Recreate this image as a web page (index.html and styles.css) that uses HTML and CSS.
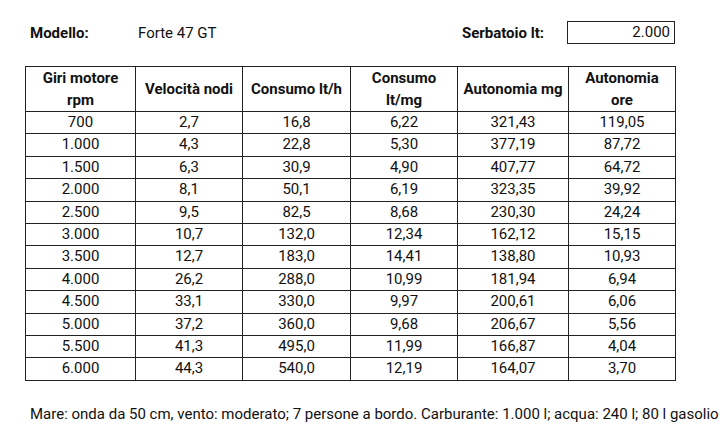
FILE: index.html
```html
<!DOCTYPE html>
<html lang="it">
<head>
<meta charset="utf-8">
<title>Forte 47 GT</title>
<link rel="stylesheet" href="styles.css">
</head>
<body>
<div class="sheet">
  <div class="top">
    <span class="label">Modello:</span>
    <span class="model">Forte 47 GT</span>
    <span class="spacer"></span>
    <span class="label-r">Serbatoio lt:</span>
    <span class="box">2.000</span>
  </div>
  <table class="data">
    <colgroup>
      <col class="c1"><col class="c2"><col class="c3"><col class="c4"><col class="c5"><col class="c6">
    </colgroup>
    <thead>
      <tr><th>Giri motore<br>rpm</th><th>Velocità nodi</th><th>Consumo lt/h</th><th>Consumo<br>lt/mg</th><th>Autonomia mg</th><th>Autonomia<br>ore</th></tr>
    </thead>
    <tbody>
      <tr><td>700</td><td>2,7</td><td>16,8</td><td>6,22</td><td>321,43</td><td>119,05</td></tr>
      <tr><td>1.000</td><td>4,3</td><td>22,8</td><td>5,30</td><td>377,19</td><td>87,72</td></tr>
      <tr><td>1.500</td><td>6,3</td><td>30,9</td><td>4,90</td><td>407,77</td><td>64,72</td></tr>
      <tr><td>2.000</td><td>8,1</td><td>50,1</td><td>6,19</td><td>323,35</td><td>39,92</td></tr>
      <tr><td>2.500</td><td>9,5</td><td>82,5</td><td>8,68</td><td>230,30</td><td>24,24</td></tr>
      <tr><td>3.000</td><td>10,7</td><td>132,0</td><td>12,34</td><td>162,12</td><td>15,15</td></tr>
      <tr><td>3.500</td><td>12,7</td><td>183,0</td><td>14,41</td><td>138,80</td><td>10,93</td></tr>
      <tr><td>4.000</td><td>26,2</td><td>288,0</td><td>10,99</td><td>181,94</td><td>6,94</td></tr>
      <tr><td>4.500</td><td>33,1</td><td>330,0</td><td>9,97</td><td>200,61</td><td>6,06</td></tr>
      <tr><td>5.000</td><td>37,2</td><td>360,0</td><td>9,68</td><td>206,67</td><td>5,56</td></tr>
      <tr><td>5.500</td><td>41,3</td><td>495,0</td><td>11,99</td><td>166,87</td><td>4,04</td></tr>
      <tr><td>6.000</td><td>44,3</td><td>540,0</td><td>12,19</td><td>164,07</td><td>3,70</td></tr>
    </tbody>
  </table>
  <p class="note">Mare: onda da 50 cm, vento: moderato; 7 persone a bordo. Carburante: 1.000 l; acqua: 240 l; 80 l gasolio</p>
</div>
</body>
</html>
```
FILE: styles.css
```css
html, body {
  margin: 0;
  padding: 0;
  background: #ffffff;
}
body {
  font-family: Roboto, "Liberation Sans", sans-serif;
  font-size: 15px;
  color: #111111;
}
.sheet {
  width: 650px;
  padding: 21px 0 0 25px;
}
.top {
  display: flex;
  align-items: center;
  height: 23px;
}
.label {
  width: 108px;
  padding-left: 5px;
  font-weight: 700;
}
.model {
  font-weight: 400;
}
.spacer {
  flex: 1;
}
.label-r {
  font-weight: 700;
  margin-right: 23px;
}
.box {
  box-sizing: border-box;
  width: 108px;
  height: 23px;
  line-height: 21px;
  border: 1px solid #222;
  text-align: right;
  padding-right: 4px;
}
.data {
  margin-top: 22px;
  width: 650px;
  table-layout: fixed;
  border-collapse: collapse;
}
.c1 { width: 110px; }
.c2 { width: 107px; }
.c3 { width: 108px; }
.c4 { width: 107px; }
.c5 { width: 111px; }
.c6 { width: 107px; }
.data th, .data td {
  border: 1px solid #222;
  padding: 0;
  text-align: center;
}
.data th {
  font-weight: 700;
  line-height: 22px;
}
.data td {
  line-height: 21.4px;
}
.note {
  margin: 22px 0 0 5px;
  line-height: 22px;
  white-space: nowrap;
}
```
